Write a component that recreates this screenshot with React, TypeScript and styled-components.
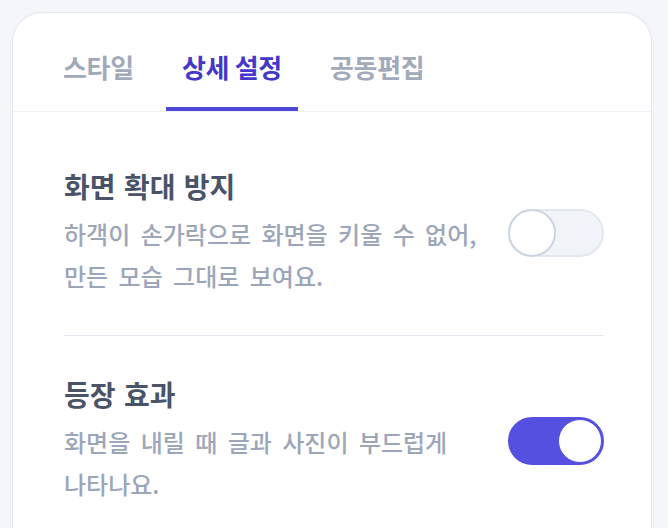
import React, { useState } from "react";
import styled, { createGlobalStyle } from "styled-components";

const GlobalStyle = createGlobalStyle`
  html, body {
    margin: 0;
    padding: 0;
    background: #f6f7fa;
    overflow: hidden;
  }
  body {
    font-family: "Noto Sans CJK KR", "Noto Sans", sans-serif;
  }
  * { box-sizing: border-box; }
`;

const Page = styled.div`
  padding: 12px 16px 0 12px;
  height: 528px;
`;

const Card = styled.div`
  background: #ffffff;
  border: 1px solid #e3e7ef;
  border-bottom: none;
  border-radius: 30px 30px 0 0;
  min-height: 560px;
  box-shadow: 0 2px 10px rgba(15, 23, 42, 0.03);
`;

const TabBar = styled.div`
  display: flex;
  gap: 16px;
  padding: 0 34px;
  border-bottom: 1px solid #eef1f6;
`;

const Tab = styled.button<{ $active?: boolean }>`
  appearance: none;
  background: none;
  border: none;
  border-bottom: 4px solid ${(p) => (p.$active ? "#4f46d6" : "transparent")};
  margin: 0;
  padding: 38px 16px 24px;
  font-family: inherit;
  font-size: 26px;
  line-height: 32px;
  font-weight: 700;
  word-spacing: 0px;
  letter-spacing: -0.3px;
  color: ${(p) => (p.$active ? "#4338ca" : "#a1aabb")};
  cursor: pointer;
`;

const Content = styled.div`
  padding: 16px 47px 0 51px;
`;

const Section = styled.div<{ $divided?: boolean }>`
  display: flex;
  align-items: center;
  justify-content: space-between;
  gap: 24px;
  padding: 40px 0 38px;
  border-top: ${(p) => (p.$divided ? "1px solid #e2e8f0" : "none")};
`;

const TextBlock = styled.div`
  flex: 1;
  min-width: 0;
`;

const Title = styled.h3`
  margin: 0 0 9px;
  font-size: 28px;
  line-height: 36px;
  font-weight: 700;
  color: #4a5468;
  word-spacing: 2px;
  letter-spacing: 0;
`;

const Description = styled.p`
  margin: 0;
  font-size: 24px;
  line-height: 42px;
  font-weight: 500;
  color: #9ca6b9;
  word-spacing: 5px;
  letter-spacing: 0;
  word-break: keep-all;
`;

const Track = styled.button<{ $on: boolean }>`
  position: relative;
  flex: none;
  width: 96px;
  height: 48px;
  padding: 0;
  border-radius: 24px;
  border: 2px solid ${(p) => (p.$on ? "#5650e0" : "#e2e8f0")};
  background: ${(p) => (p.$on ? "#5650e0" : "#f1f4f9")};
  cursor: pointer;
`;

const Knob = styled.span<{ $on: boolean }>`
  position: absolute;
  border-radius: 50%;
  background: #ffffff;
  ${(p) =>
    p.$on
      ? `
    top: 0;
    right: 0;
    width: 44px;
    height: 44px;
    border: 1px solid #5650e0;
  `
      : `
    top: -2px;
    left: -2px;
    width: 48px;
    height: 48px;
    border: 2px solid #cbd5e1;
  `}
`;

const Toggle: React.FC<{ on: boolean; onChange: () => void; label: string }> = ({
  on,
  onChange,
  label,
}) => (
  <Track $on={on} onClick={onChange} role="switch" aria-checked={on} aria-label={label}>
    <Knob $on={on} />
  </Track>
);

const tabs = ["스타일", "상세 설정", "공동편집"];

export default function App() {
  const [active, setActive] = useState(1);
  const [zoomLock, setZoomLock] = useState(false);
  const [entrance, setEntrance] = useState(true);

  return (
    <>
      <GlobalStyle />
      <Page>
        <Card>
          <TabBar>
            {tabs.map((t, i) => (
              <Tab key={t} $active={i === active} onClick={() => setActive(i)}>
                {t}
              </Tab>
            ))}
          </TabBar>
          <Content>
            <Section>
              <TextBlock>
                <Title>화면 확대 방지</Title>
                <Description>
                  하객이 손가락으로 화면을 키울 수 없어, 만든 모습 그대로 보여요.
                </Description>
              </TextBlock>
              <Toggle on={zoomLock} onChange={() => setZoomLock(!zoomLock)} label="화면 확대 방지" />
            </Section>
            <Section $divided>
              <TextBlock>
                <Title>등장 효과</Title>
                <Description>
                  화면을 내릴 때 글과 사진이 부드럽게 나타나요.
                </Description>
              </TextBlock>
              <Toggle on={entrance} onChange={() => setEntrance(!entrance)} label="등장 효과" />
            </Section>
          </Content>
        </Card>
      </Page>
    </>
  );
}
